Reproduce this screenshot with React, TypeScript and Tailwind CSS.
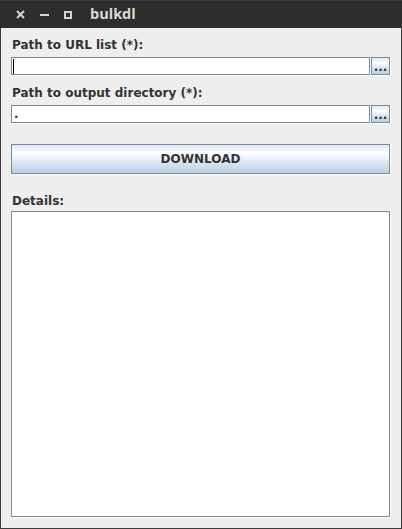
import React from 'react';

const labelCls = "h-[15px] leading-[15px] text-[12px] font-bold text-[#333333] font-['DejaVu_Sans',sans-serif] pl-[1px]";

const PathField: React.FC<{ value?: string; caret?: boolean }> = ({ value, caret }) => (
  <div className="flex h-[19px]">
    <div className="flex-1 border-r border-b border-white">
      <div className="h-full border border-[#7a8a99] bg-white flex items-center pl-[2px]">
        {caret && <div className="w-[1px] h-[15px] bg-black ml-[-1px]" />}
        {value && (
          <span className="text-[12px] leading-[15px] font-bold text-[#333333] font-['DejaVu_Sans',sans-serif]">{value}</span>
        )}
      </div>
    </div>
    <div className="w-[20px] border-r border-b border-white">
      <button className="w-full h-full border border-[#7a8a99] bg-[linear-gradient(#dde8f3_0%,#ffffff_30%,#dde8f3_60%,#b8cfe5_100%)] flex items-end justify-center pb-[1px] text-[12px] leading-[12px] font-bold text-[#333333] font-['DejaVu_Sans',sans-serif]">
        ...
      </button>
    </div>
  </div>
);

export default function App() {
  return (
    <div className="w-[402px] h-[529px] flex flex-col bg-[#eeeeee]">
      <div className="h-[28px] bg-[#2d2d2d] border-t border-[#3a3a3a] flex items-center shrink-0">
        <svg width="9" height="9" viewBox="0 0 9 9" className="ml-[16px]">
          <path d="M1 1 L8 8 M8 1 L1 8" stroke="#d6d6d6" strokeWidth="2" />
        </svg>
        <svg width="9" height="9" viewBox="0 0 9 9" className="ml-[15px]">
          <path d="M0 5 H9" stroke="#d6d6d6" strokeWidth="2" />
        </svg>
        <svg width="8" height="8" viewBox="0 0 8 8" className="ml-[15px]">
          <rect x="1" y="1" width="6" height="6" fill="none" stroke="#d6d6d6" strokeWidth="2" />
        </svg>
        <span className="ml-[18px] text-[14.5px] font-bold text-[#dfdbd2] font-['Open_Sans',sans-serif] leading-none mb-[1px]">
          bulkdl
        </span>
      </div>
      <div className="flex-1 flex flex-col border-x border-b border-[#3c3c3c] px-[10px] pt-[10px] pb-[10px]">
        <div className={labelCls}>Path to URL list (*):</div>
        <div className="mt-[4px]">
          <PathField caret />
        </div>
        <div className={`${labelCls} mt-[10px]`}>Path to output directory (*):</div>
        <div className="mt-[4px]">
          <PathField value="." />
        </div>
        <div className="mt-[20px] h-[31px] border-r border-b border-white">
          <button className="w-full h-full border border-[#7a8a99] bg-[linear-gradient(#dde8f3_0%,#ffffff_30%,#dde8f3_60%,#b8cfe5_100%)] text-[12px] font-bold text-[#333333] font-['DejaVu_Sans',sans-serif]">
            DOWNLOAD
          </button>
        </div>
        <div className={`${labelCls} mt-[19px]`}>Details:</div>
        <div className="mt-[2px] flex-1 border-r border-b border-white">
          <div className="h-full border border-[#7a8a99] bg-white" />
        </div>
      </div>
    </div>
  );
}
